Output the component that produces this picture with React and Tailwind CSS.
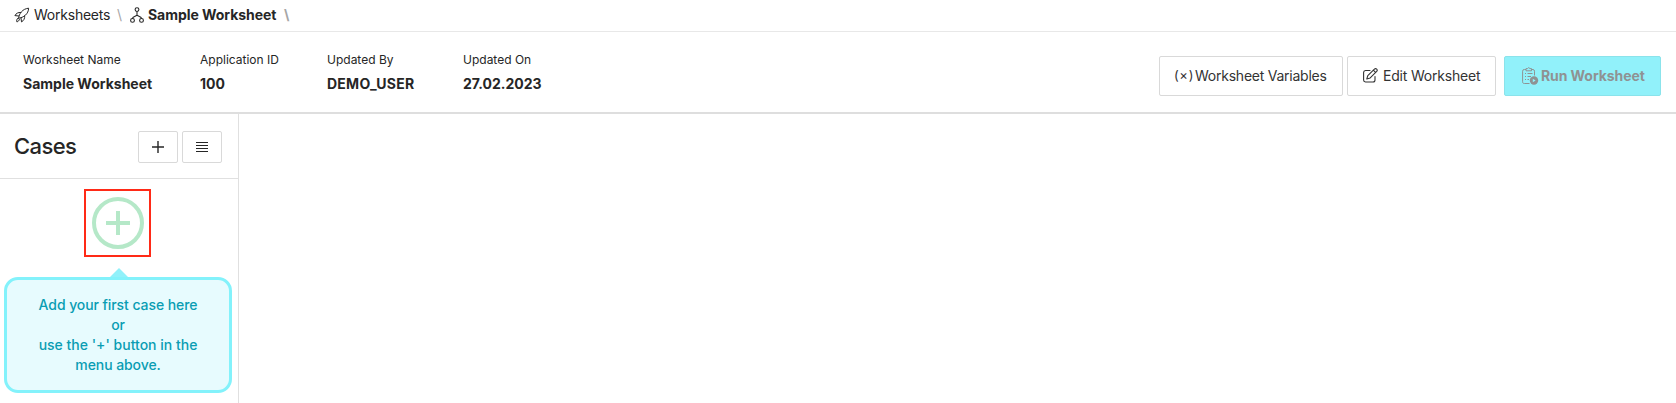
function Rocket() {
  return (
    <svg width="16" height="16" viewBox="0 0 16 16" fill="none" stroke="currentColor" strokeWidth="1" strokeLinejoin="round" strokeLinecap="round">
      <path d="M4.6 11.2C5 6.6 8.6 1.8 14.6 1.2C14.6 6.8 9.6 10.8 4.6 11.2Z" />
      <path d="M6.8 5.4C4 5.3 2.2 6.3 .9 8.6L4.8 9M10.7 8.9C10.9 11.5 9.8 13.6 7.5 14.9L7 10.9M3.6 11.4C2.6 12.4 2.6 13.6 2.9 14.9C4.2 14.5 5 13.8 5.4 12.5" />
    </svg>
  );
}

function Hierarchy() {
  return (
    <svg width="14" height="16" viewBox="0 0 14 16" fill="none" stroke="currentColor" strokeWidth="1.1">
      <circle cx="7" cy="2.6" r="1.9" />
      <circle cx="2.5" cy="13.4" r="1.9" />
      <circle cx="11.5" cy="13.4" r="1.9" />
      <path d="M7 4.4V8.4M2.5 11.5C2.5 9.6 5.2 9.8 7 8.2C8.8 9.8 11.5 9.6 11.5 11.5" />
    </svg>
  );
}

function Pencil() {
  return (
    <svg width="15" height="15" viewBox="0 0 15 15" fill="none" stroke="currentColor" strokeWidth="1.1" strokeLinejoin="round" strokeLinecap="round">
      <path d="M7 2.5H2.5A2 2 0 0 0 .6 4.5V12A2 2 0 0 0 2.5 14H10A2 2 0 0 0 12 12V8.5" />
      <path d="M3.8 11L4.8 7.6L11.4 1.1A1.5 1.5 0 0 1 13.7 3.3L7.2 9.9Z M10.3 2.2L12.6 4.4" />
    </svg>
  );
}

function ClipboardPlay() {
  return (
    <svg width="17" height="18" viewBox="0 0 17 18" fill="none" stroke="currentColor" strokeWidth="1">
      <path d="M4 2.5H2.4A1.7 1.7 0 0 0 .6 4.2V14.3A1.7 1.7 0 0 0 2.4 16.5H7.5M9.5 2.5H11A1.7 1.7 0 0 1 12.5 4.2V8.5" />
      <path d="M4 1.6H5.4L6.7.6L8 1.6H9.5V3.8H4Z" />
      <path d="M3 6.5H4M5.5 6.5H10.5M3 9.5H4M5.5 9.5H9M3 12.5H4M5.5 12.5H7" />
      <circle cx="12" cy="13.5" r="4.2" fill="currentColor" stroke="none" />
      <path d="M10.8 11.7L13.6 13.5L10.8 15.3Z" fill="#91f1fa" stroke="none" />
    </svg>
  );
}

function Field({ label, value, className, valueClass = '' }) {
  return (
    <div className={className}>
      <div className="text-[12px] leading-[18px]">{label}</div>
      <div className={`mt-[5px] text-[14px] leading-[20px] font-bold ${valueClass}`}>{value}</div>
    </div>
  );
}

export default function App() {
  return (
    <div className="flex h-[403px] w-[1676px] flex-col overflow-hidden bg-white font-['Inter',sans-serif] text-[14px] text-[#262626]">
      <nav className="flex h-8 shrink-0 items-center border-b border-[#e8e8e8] pb-px pl-[14px]">
        <Rocket />
        <span className="-mt-0.5 ml-1 w-[83px] tracking-[-0.23px]">Worksheets</span>
        <span className="-mt-0.5 w-[13px] text-[#a6a6a6]">\</span>
        <Hierarchy />
        <span className="-mt-0.5 ml-1 w-[136px] font-bold tracking-[-0.05px] whitespace-nowrap">Sample Worksheet</span>
        <span className="-mt-0.5 font-bold text-[#a6a6a6]">\</span>
      </nav>

      <header className="flex h-[82px] shrink-0 border-b-2 border-[#dedede] pl-[23px]">
        <Field className="w-[177px] pt-[19px]" label="Worksheet Name" value="Sample Worksheet" />
        <Field className="w-[127px] pt-[19px]" label="Application ID" value="100" />
        <Field className="w-[136px] pt-[19px]" label="Updated By" value="DEMO_USER" valueClass="tracking-[0.25px]" />
        <Field className="pt-[19px]" label="Updated On" value="27.02.2023" />
        <div className="mt-6 mr-[15px] ml-auto flex h-10 text-[#333]">
          <button className="flex w-[184px] items-center rounded-[2px] border border-[#d9d9d9] pb-px pl-[13px] tracking-[-0.24px] whitespace-nowrap">
            <span className="w-[22px] text-[13px] tracking-[0.7px]">(×)</span>
            Worksheet Variables
          </button>
          <button className="ml-1 flex w-[149px] items-center gap-[5px] rounded-[2px] border border-[#d9d9d9] pb-px pl-[15px] tracking-[-0.2px] whitespace-nowrap">
            <Pencil />
            Edit Worksheet
          </button>
          <button className="ml-2 flex w-[157px] items-center gap-[2px] rounded-[2px] border border-[#8be3eb] bg-[#91f1fa] pb-px pl-[17px] font-bold tracking-[-0.08px] whitespace-nowrap text-[#8f9293]">
            <ClipboardPlay />
            Run Worksheet
          </button>
        </div>
      </header>

      <main className="flex flex-1">
        <aside className="w-[239px] border-r border-[#e0e0e0]">
          <div className="flex h-[65px] items-center gap-1 border-b border-[#e0e0e0] pt-[2px] pl-[14px]">
            <h1 className="w-[120px] pb-[2px] text-[22px] font-medium tracking-[-0.6px]">Cases</h1>
            <button className="flex h-8 w-10 items-center justify-center rounded-[2px] border border-[#d9d9d9]">
              <svg width="12" height="12" viewBox="0 0 12 12" stroke="currentColor" strokeWidth="1.4">
                <path d="M6 0V12M0 6H12" />
              </svg>
            </button>
            <button className="flex h-8 w-10 items-center justify-center rounded-[2px] border border-[#d9d9d9]">
              <svg width="12" height="10" viewBox="0 0 12 10" stroke="currentColor">
                <path d="M0 .5H12M0 3.5H12M0 6.5H12M0 9.5H12" />
              </svg>
            </button>
          </div>
          <div className="mt-[10px] ml-[84px] flex h-[68px] w-[67px] items-center justify-center border-2 border-[#ff2a17]">
            <svg className="shrink-0" width="52" height="52" viewBox="0 0 52 52" fill="none" stroke="#b5e8c8" strokeWidth="4">
              <circle cx="26" cy="26" r="24" />
              <path d="M26 14V38M14 26H38" />
            </svg>
          </div>
          <svg className="mt-[11px] ml-[109px] block" width="20" height="9" viewBox="0 0 20 9">
            <path d="M.5 9.5L10 0L19.5 9.5Z" fill="#91f1fa" />
          </svg>
          <div className="ml-1 h-[116px] w-[228px] rounded-[14px] border-[3px] border-[#83f2fb] bg-[#e7fbfe] pt-[15px] text-center leading-[20px] font-medium tracking-[-0.08px] text-[#0a9db3]">
            Add your first case here
            <br />
            or
            <br />
            <span className="tracking-normal">use the '+' button in the</span>
            <br />
            menu above.
          </div>
        </aside>
      </main>
    </div>
  );
}
